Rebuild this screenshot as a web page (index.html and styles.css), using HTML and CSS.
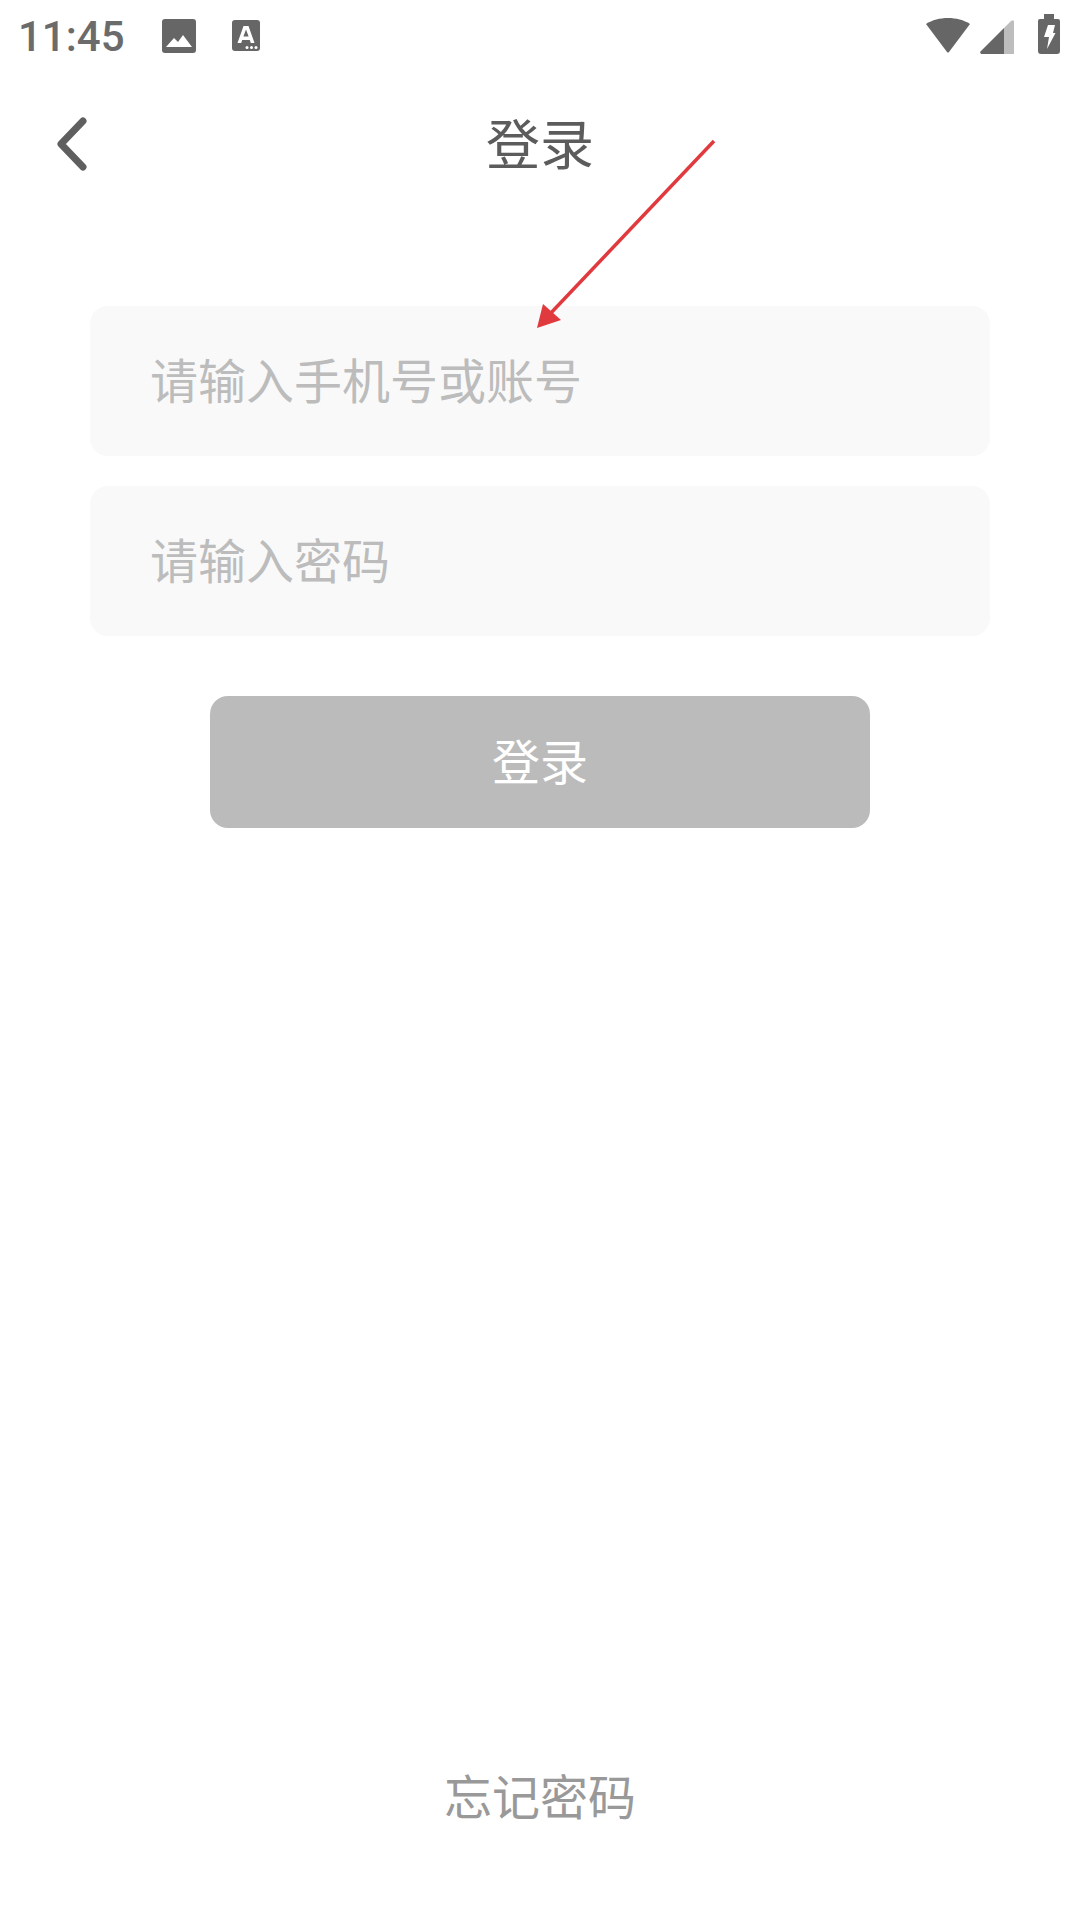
FILE: index.html
```html
<!DOCTYPE html>
<html>
<head>
  <title>登录</title>
  <link rel="stylesheet" href="styles.css">
</head>
<body>
  <div class="status-bar">
    <span class="time">11:45</span>
    <svg class="icon-photo" width="36" height="36" viewBox="0 0 36 36">
      <rect width="34" height="34" x="1" y="1" rx="3" fill="#666"/>
      <path d="M5 29 L13 20 L17 24 L22 17 L31 29 Z" fill="#fff"/>
    </svg>
    <svg class="icon-font" width="30" height="32" viewBox="0 0 30 32">
      <rect width="28" height="31" x="1" rx="3" fill="#666"/>
      <path d="M6.5 23 L12.5 6 H17.5 L23.5 23 H19.8 L18.8 20 H11.2 L10.2 23 Z M12.4 16.6 H17.6 L15 9.5 Z" fill="#fff" fill-rule="evenodd"/>
      <circle cx="16" cy="27.5" r="1.5" fill="#fff"/>
      <circle cx="20.5" cy="27.5" r="1.5" fill="#fff"/>
      <circle cx="25" cy="27.5" r="1.5" fill="#fff"/>
    </svg>
    <div class="status-right">
      <svg class="icon-wifi" width="46" height="36" viewBox="0 0 46 36">
        <path d="M1 7 C13 -1 33 -1 45 7 L24 35 Q23 36 22 35 Z" fill="#666"/>
      </svg>
      <svg class="icon-signal" width="34" height="34" viewBox="0 0 34 34">
        <path d="M0 32 L24 8 V34 H1 Z" fill="#666"/>
        <path d="M24 8 L31 1 Q34 -1 34 2 V34 H24 Z" fill="#bdbdbd"/>
      </svg>
      <svg class="icon-battery" width="22" height="40" viewBox="0 0 22 40">
        <path d="M6 0 H16 V5 H20 Q22 5 22 7 V37 Q22 40 19 40 H3 Q0 40 0 37 V7 Q0 5 2 5 H6 Z" fill="#666"/>
        <path d="M10 11 H17 L15 19 H17.5 L9 35 L11 23 H6 Z" fill="#fff"/>
      </svg>
    </div>
  </div>

  <div class="title-bar">
    <svg class="back" width="36" height="56" viewBox="0 0 36 56">
      <path d="M29 5 L7 28 L29 51" fill="none" stroke="#5f5f5f" stroke-width="7" stroke-linecap="round" stroke-linejoin="round"/>
    </svg>
    <h1>登录</h1>
  </div>

  <div class="form">
    <div class="field">请输入手机号或账号</div>
    <div class="field">请输入密码</div>
    <div class="login-btn">登录</div>
  </div>

  <div class="forgot">忘记密码</div>

  <svg class="arrow" width="1080" height="400" viewBox="0 0 1080 400">
    <line x1="714" y1="141" x2="549" y2="315" stroke="#e03a3e" stroke-width="3.5"/>
    <path d="M537 328 L543 304 L561 320 Z" fill="#e03a3e"/>
  </svg>
</body>
</html>
```

FILE: styles.css
```css
html, body {
  margin: 0;
  padding: 0;
}

body {
  width: 1080px;
  height: 1920px;
  position: relative;
  display: flex;
  flex-direction: column;
  background-color: #fff;
  font-family: "Noto Sans CJK SC", "Noto Sans", sans-serif;
  overflow: hidden;
}

.status-bar {
  height: 72px;
  display: flex;
  align-items: center;
  padding: 0 20px 0 18px;
}

.time {
  font-family: Roboto, sans-serif;
  font-size: 42px;
  font-weight: 500;
  color: #6b6b6b;
  width: 143px;
}

.icon-photo {
  margin-right: 34px;
}

.status-right {
  margin-left: auto;
  align-self: flex-start;
  display: flex;
  align-items: flex-start;
}

.icon-wifi {
  margin: 17px 9px 0 0;
}

.icon-signal {
  margin: 20px 24px 0 0;
}

.icon-battery {
  margin-top: 14px;
}

.title-bar {
  height: 144px;
  padding-bottom: 6px;
  box-sizing: border-box;
  position: relative;
  display: flex;
  align-items: center;
  justify-content: center;
}

.title-bar h1 {
  margin: 0;
  font-size: 54px;
  font-weight: normal;
  color: #5c5c5c;
}

.back {
  position: absolute;
  left: 54px;
  top: 44px;
}

.form {
  padding: 90px 90px 0;
  display: flex;
  flex-direction: column;
  align-items: center;
}

.field {
  width: 100%;
  height: 150px;
  margin-bottom: 30px;
  padding: 0 0 7px 60px;
  box-sizing: border-box;
  display: flex;
  align-items: center;
  background-color: #f9f9f9;
  border-radius: 18px;
  font-size: 48px;
  color: #bcbcbc;
}

.login-btn {
  width: 660px;
  height: 132px;
  margin-top: 30px;
  padding-bottom: 7px;
  box-sizing: border-box;
  display: flex;
  align-items: center;
  justify-content: center;
  background-color: #bbb;
  border-radius: 18px;
  font-size: 48px;
  color: #fff;
}

.forgot {
  margin-top: auto;
  margin-bottom: 91px;
  text-align: center;
  font-size: 48px;
  color: #999;
}

.arrow {
  position: absolute;
  left: 0;
  top: 0;
}
```
